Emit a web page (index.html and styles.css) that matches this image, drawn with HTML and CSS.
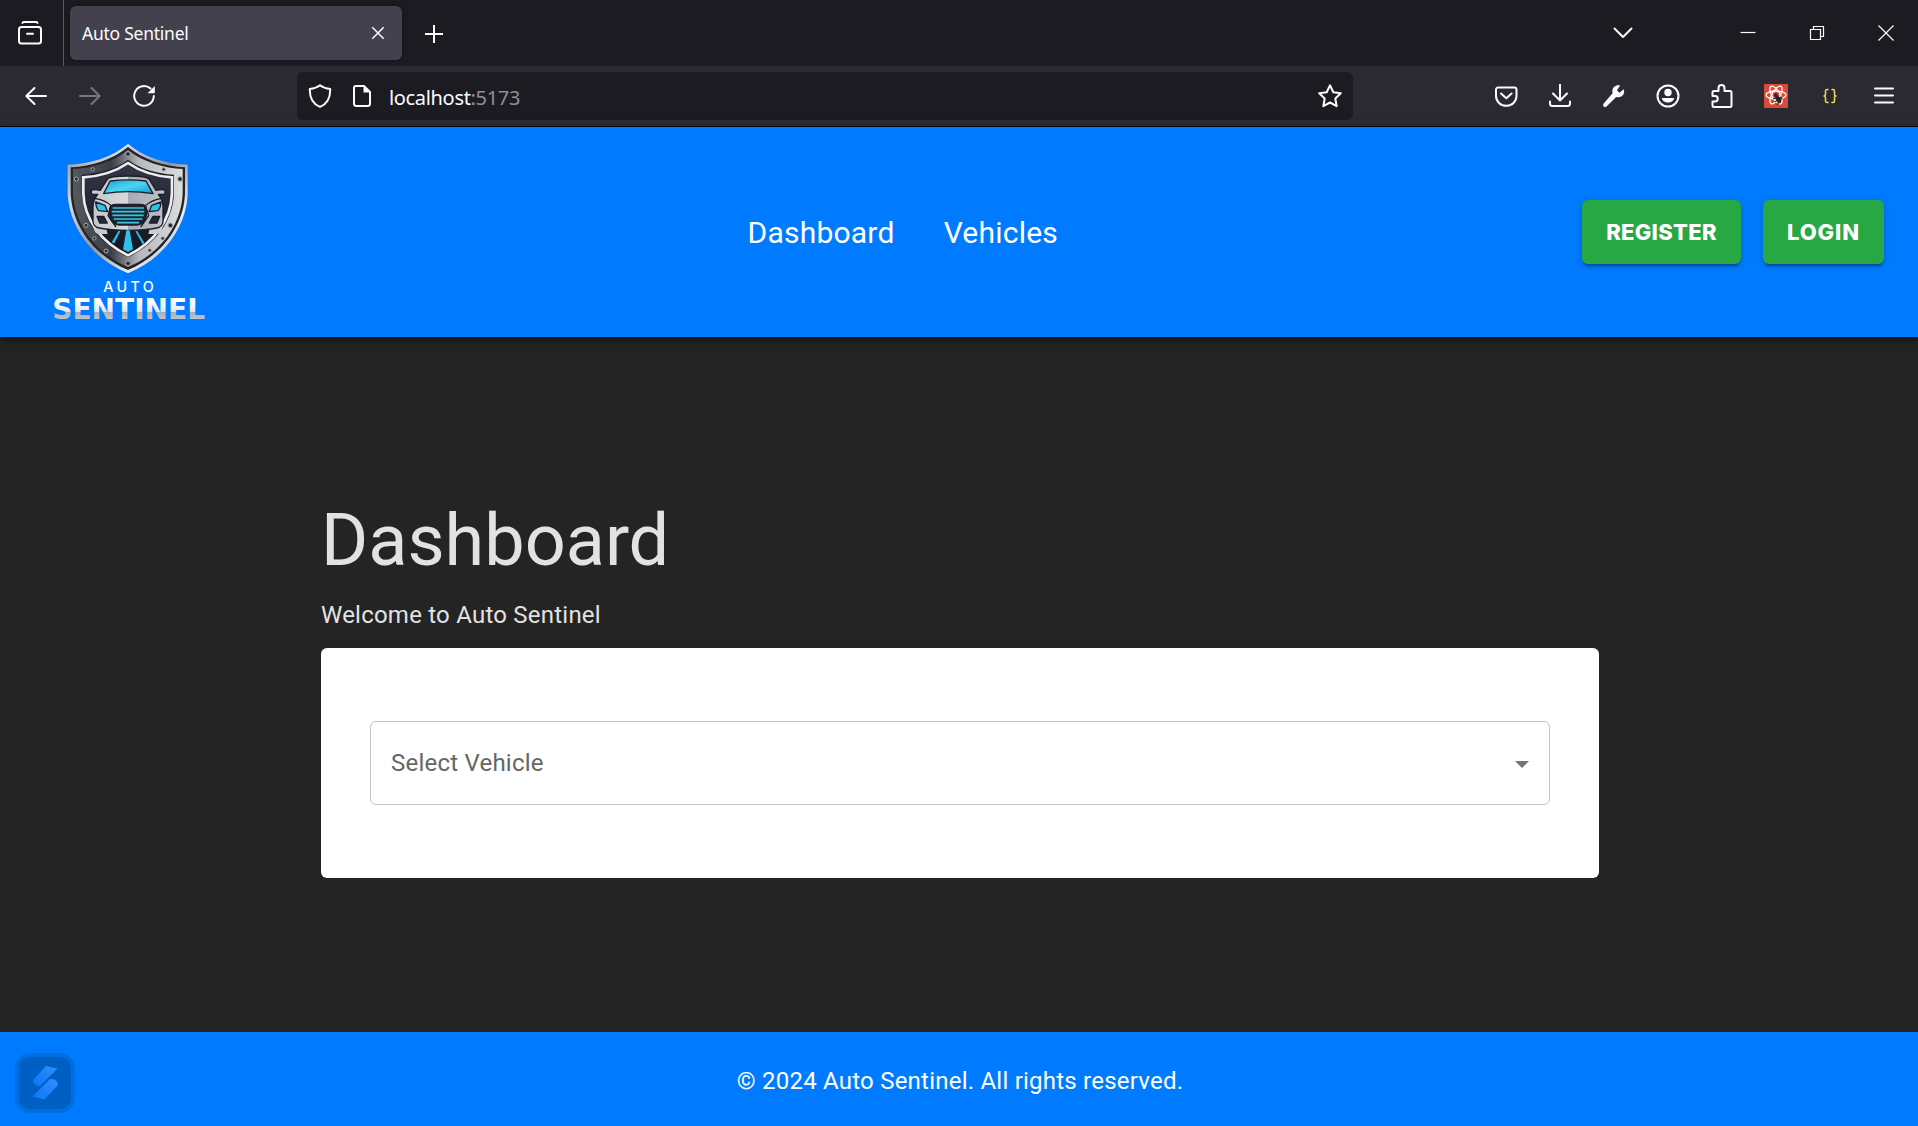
FILE: index.html
```html
<!DOCTYPE html>
<html lang="en">
<head>
<meta charset="utf-8">
<title>Auto Sentinel</title>
<link rel="stylesheet" href="styles.css">
</head>
<body>
<div class="tabbar">
  <div class="view-button">
    <svg class="icon" viewBox="0 0 24 24"><path d="M4.5 1.9Q5 .9 6.500 .9h11q1.500 0 2 1" /><rect x="1" y="6" width="22" height="16.500" rx="2.500"/><path d="M9 12.700h6"/></svg>
  </div>
  <div class="tab">
    <span class="tab-title">Auto Sentinel</span>
    <svg class="tab-close" viewBox="0 0 14 14"><path d="M1.300 1.300l11.400 11.400M12.700 1.300L1.300 12.700"/></svg>
  </div>
  <svg class="new-tab" viewBox="0 0 20 20"><path d="M10 1v18M1 10h18"/></svg>
  <div class="window-controls">
    <svg class="icon list-tabs" viewBox="0 0 24 24"><path d="M3.500 7.500l8.500 8.500 8.500-8.500"/></svg>
    <svg class="icon thin" viewBox="0 0 24 24"><path d="M4.500 11.500h15"/></svg>
    <svg class="icon thin" viewBox="0 0 24 24"><path d="M5.500 8.500h10v10h-10zM8.500 8.500v-3h10v10h-3"/></svg>
    <svg class="icon thin slant" viewBox="0 0 24 24"><path d="M4.500 4.500l15 15M19.500 4.500l-15 15"/></svg>
  </div>
</div>
<div class="toolbar">
  <div class="nav-buttons">
    <svg class="icon" viewBox="0 0 24 24"><path d="M22 12H2.500M10.500 4L2.300 12l8.200 8"/></svg>
    <svg class="icon dim" viewBox="0 0 24 24"><path d="M2 12h19.500M13.500 4l8.200 8-8.200 8"/></svg>
    <svg class="icon" viewBox="0 0 24 24"><path d="M21.800 12A9.800 9.800 0 1 1 18.500 4.600"/><path class="solid" d="M22.800 2v7.200h-7.200z"/></svg>
  </div>
  <div class="urlbar">
    <svg class="icon" viewBox="0 0 24 24"><path d="M12 1.200C9 3.500 5.500 4.500 1.800 5.100 1.600 13 4 19.500 12 22.900 20 19.500 22.400 13 22.200 5.100 18.500 4.500 15 3.500 12 1.200z"/></svg>
    <svg class="icon page-icon" viewBox="0 0 24 24"><path d="M6 2h8l6 6v11.500a2.500 2.500 0 0 1-2.500 2.500h-11A2.500 2.500 0 0 1 4 19.500V4A2 2 0 0 1 6 2z"/><path class="solid" d="M13.500 1.500v7h7z"/></svg>
    <span class="url">localhost<span class="port">:5173</span></span>
    <svg class="icon star" viewBox="0 0 24 24"><path d="M12 1.300l3.300 6.900 7.500 1-5.500 5.300 1.400 7.700L12 18.500l-6.700 3.700 1.400-7.700L1.200 9.200l7.500-1z"/></svg>
  </div>
  <div class="tools">
    <svg class="icon" viewBox="0 0 24 24"><path d="M4 3.500h16.500a2 2 0 0 1 2 2V12a10.200 9.800 0 0 1-20.500 0V5.500a2 2 0 0 1 2-2zM7 9.500l5.300 4.800 5.300-4.800"/></svg>
    <svg class="icon" viewBox="0 0 24 24"><path d="M12 0v16M5 9.500l7 7 7-7M2 17.500v2A2.500 2.500 0 0 0 4.500 22h15a2.500 2.500 0 0 0 2.500-2.500v-2"/></svg>
    <svg class="icon" viewBox="0 0 24 24"><path class="solid" d="M21.700 5.200l-4.200 3.500-2.600-2.400 3.300-4.700C13.500.300 9.200 4 10.600 9.300L1.500 19.700c-1.500 2 1 4.500 3 2.800l9.700-9.600c5.300 1.600 9.300-2.800 7.500-7.700z"/></svg>
    <svg class="icon" viewBox="0 0 24 24"><circle cx="12" cy="12" r="10.500"/><circle class="solid" cx="12" cy="8.500" r="3.700"/><path class="solid" d="M5.800 14h12.400c-.8 6-11.600 6-12.400 0z"/></svg>
    <svg class="icon" viewBox="0 0 24 24"><path d="M2.500 12V8.500Q2.500 7 4 7H8.500V4a3 3 0 0 1 6 0v3H20q1.500 0 1.500 1.500v13Q21.500 23 20 23H4q-1.500 0-1.500-1.500V17.500H5a2.700 2.700 0 0 0 0-5.500z"/></svg>
    <svg class="icon react" viewBox="0 0 24 24"><rect class="react-bg" width="24" height="24" rx="1"/><g class="orbit"><ellipse cx="12" cy="11" rx="10" ry="4"/><ellipse cx="12" cy="11" rx="10" ry="4" transform="rotate(60 12 11)"/><ellipse cx="12" cy="11" rx="10" ry="4" transform="rotate(120 12 11)"/></g><g transform="rotate(-30 14 15)"><circle class="bug" cx="14" cy="10.500" r="1.800"/><ellipse class="bug" cx="14" cy="15.500" rx="2.200" ry="4"/><path class="bug-legs" d="M10 12.500l8 2.500M10 16h8M10.500 19.500l7-3"/></g></svg>
    <svg class="icon braces" viewBox="0 0 24 24"><circle cx="12" cy="12" r="10.500"/><path d="M10 5.500H9q-1.500 0-1.500 1.500v3q0 2-1.500 2 1.500 0 1.500 2v3q0 1.500 1.500 1.500h1M14 5.500h1q1.500 0 1.500 1.500v3q0 2 1.500 2-1.500 0-1.500 2v3q0 1.500-1.500 1.500h-1"/></svg>
    <svg class="icon" viewBox="0 0 24 24"><path d="M3 4.500h18M3 11.500h18M3 18.500h18"/></svg>
  </div>
</div>
<header class="site-header">
  <svg class="logo" viewBox="0 -9 540 630" role="img">
    <defs>
      <linearGradient id="steel" x1="0" y1="0" x2="1" y2="1"><stop offset="0" stop-color="#85898f"/><stop offset=".25" stop-color="#d9dbdd"/><stop offset=".5" stop-color="#92969b"/><stop offset=".75" stop-color="#eceded"/><stop offset="1" stop-color="#888"/></linearGradient>
      <linearGradient id="rim" x1="0" y1="0" x2="1" y2="0"><stop offset="0" stop-color="#55595f"/><stop offset=".35" stop-color="#3b3e48"/><stop offset=".6" stop-color="#b6b8bb"/><stop offset="1" stop-color="#dcdddd"/></linearGradient>
      <linearGradient id="inside" x1="0" y1="0" x2="0" y2="1"><stop offset="0" stop-color="#343746"/><stop offset="1" stop-color="#12141f"/></linearGradient>
      <linearGradient id="car" x1="0" y1="0" x2="1" y2="0"><stop offset="0" stop-color="#c6c7cd"/><stop offset=".5" stop-color="#d8d8dc"/><stop offset=".5" stop-color="#a9abb3"/><stop offset="1" stop-color="#bfc0c7"/></linearGradient>
      <linearGradient id="glass" x1="0" y1="0" x2="1" y2="1"><stop offset="0" stop-color="#16a0d8"/><stop offset=".5" stop-color="#4bd5f2"/><stop offset="1" stop-color="#119bd0"/></linearGradient>
      <linearGradient id="word" x1="0" y1="0" x2="0" y2="1"><stop offset=".25" stop-color="#fff"/><stop offset=".58" stop-color="#e2e8ef"/><stop offset=".61" stop-color="#a7b1bd"/><stop offset=".8" stop-color="#bdc3ca"/></linearGradient>
    </defs>
    <path fill="url(#steel)" d="M264 41C220 80 150 102 83 104V190C87 290 155 385 264 430 373 385 440 290 443 190V104C378 102 308 80 264 41z"/>
    <path fill="#22252d" d="M264 51C220 88 155 109 92 112V190C96 285 160 376 264 420 368 376 432 285 435 190V112C373 109 308 88 264 51z"/>
    <path fill="url(#rim)" d="M264 60C220 96 155 115 99 117V190C103 280 163 369 264 411 365 369 425 280 428 190V117C373 115 308 96 264 60z"/>
    <path fill="#1e212b" d="M264 89C225 118 176 131 125 134V190C128 272 180 343 264 382 348 343 399 272 402 190V134C352 131 303 118 264 89z"/>
    <path fill="url(#inside)" stroke="#eceeef" stroke-width="8" d="M264 99C225 126 178 139 130 142V190C132 268 184 337 264 376 344 337 393 268 396 190V142C350 139 303 126 264 99z"/>
    <g fill="#25272c" stroke="#aaa" stroke-width="3"><circle cx="264" cy="72" r="7"/><circle cx="158" cy="118" r="5"/><circle cx="371" cy="118" r="5"/><circle cx="109" cy="147" r="6"/><circle cx="420" cy="147" r="7"/><circle cx="138" cy="286" r="6"/><circle cx="391" cy="286" r="7"/><circle cx="163" cy="325" r="5"/><circle cx="368" cy="325" r="5"/><circle cx="198" cy="363" r="6"/><circle cx="329" cy="361" r="5"/><circle cx="264" cy="400" r="7"/></g>
    <path fill="#c9cbd0" d="M161 294h37l5 18h-25q-14 0-17-18zM367 294h-37l-5 18h25q14 0 17-18z"/>
    <g stroke="#1b1e29" stroke-width="4" stroke-linejoin="round">
      <path fill="url(#car)" d="M154 181q7-4 27 0l21-33q7-10 62-10t64 10l20 33q20-4 27 0v9q-4 5-20 3 14 18 14 37v44q-1 17-18 20-35 7-87 7t-87-7q-17-3-18-20v-44q0-19 14-37-15 2-19-3z"/>
      <path fill="url(#glass)" d="M210 153q54-7 108 0l21 38q-73-12-148 0z"/>
      <path fill="#2ec2ed" d="M167 216l28 10 8 19-27-3q-8-8-9-26zM363 216l-28 10-8 19 27-3q8-8 9-26z"/>
      <path fill="none" d="M164 205q30 4 50 22l-10 30 24 34M366 205q-30 4-50 22l10 30-24 34"/>
      <path fill="#252936" d="M171 259h20l11 20h-23zM359 259h-20l-11 20h23z"/>
      <path fill="#182432" d="M226 223h77q17 0 17 20 0 40-30 42h-52q-30-2-30-42 0-20 18-20z"/>
    </g>
    <g stroke="#39c7df" stroke-width="5"><path d="M218 234h94M215 245h98M217 256h94M221 267h86M231 278h66"/></g>
    <path fill="#30bde8" d="M259 301h10l10 57-15 8-15-8zM236 302l5 2-18 36-8-3zM286 304l5-2 22 36-4 6z"/>
    <text class="logo-auto" x="190" y="486" textLength="151">AUTO</text>
    <text class="logo-word" x="37" y="566" textLength="458" lengthAdjust="spacingAndGlyphs" fill="url(#word)">SENTINEL</text>
  </svg>
  <nav class="site-nav"><a>Dashboard</a><a>Vehicles</a></nav>
  <div class="actions"><button class="button register">REGISTER</button><button class="button login">LOGIN</button></div>
</header>
<main class="content">
  <h1>Dashboard</h1>
  <p>Welcome to Auto Sentinel</p>
  <section class="card">
    <div class="select"><span>Select Vehicle</span><svg class="arrow" viewBox="0 0 14 7"><path d="M0 0h14L7 7z"/></svg></div>
  </section>
</main>
<footer class="site-footer">
  <span>© 2024 Auto Sentinel. All rights reserved.</span>
  <div class="badge">
    <svg viewBox="0 0 52 52"><defs><linearGradient id="bolt" x1="0" y1="1" x2="1" y2="0"><stop offset="0" stop-color="#0878f4"/><stop offset="1" stop-color="#308eff"/></linearGradient></defs><g fill="url(#bolt)"><path d="M27 9l11.500 2.500L21 29c-4 0-7-2-7-6z"/><path d="M31 22c4 0 8 1 8 6L25.500 42.500 13.500 39.500z"/></g></svg>
  </div>
</footer>
</body>
</html>
```
FILE: styles.css
```css
* { box-sizing: border-box; }
body {
  margin: 0;
  width: 1918px;
  height: 1126px;
  display: flex;
  flex-direction: column;
  overflow: hidden;
  background: #242424;
  font-family: Roboto, sans-serif;
}
svg { display: block; flex: none; }
.icon {
  width: 24px;
  height: 24px;
  fill: none;
  stroke: #fbfbfe;
  stroke-width: 2;
  stroke-linejoin: round;
  stroke-linecap: round;
}
.solid { fill: #fbfbfe; stroke: none; }
.dim { stroke: #77767d; }

.tabbar {
  flex: none;
  height: 66px;
  display: flex;
  align-items: center;
  background: #1c1b22;
  font-family: "Noto Sans", "Open Sans", sans-serif;
}
.view-button {
  width: 64px;
  height: 66px;
  padding: 21px 0 0 18px;
  border-right: 1px solid #5b5a63;
}
.tab {
  width: 332px;
  height: 54px;
  margin-left: 6px;
  padding: 0 17px 0 12px;
  display: flex;
  align-items: center;
  justify-content: space-between;
  border-radius: 6px;
  background: #42414d;
  box-shadow: 0 0 4px rgba(0, 0, 0, .4);
}
.tab-title { color: #fbfbfe; font-size: 17.5px; letter-spacing: -.25px; }
.tab-close { width: 14px; height: 14px; stroke: #fbfbfe; stroke-width: 1.5; }
.new-tab { width: 20px; height: 20px; margin: 2px 0 0 22px; stroke: #fbfbfe; stroke-width: 2; }
.window-controls {
  margin-left: auto;
  margin-right: 20px;
  display: flex;
  gap: 45px;
}
.list-tabs { margin-right: 56px; }
.thin { stroke-width: 1.2; stroke-linecap: butt; stroke-linejoin: miter; }

.toolbar {
  flex: none;
  height: 61px;
  display: flex;
  align-items: center;
  background: #2b2a33;
  border-bottom: 1px solid #0c0c0d;
}
.nav-buttons { display: flex; gap: 30px; margin-left: 24px; }
.urlbar {
  width: 1056px;
  height: 48px;
  margin-left: 141px;
  padding: 0 11px;
  display: flex;
  align-items: center;
  border-radius: 6px;
  background: #1c1b22;
}
.page-icon { margin-left: 18px; }
.url {
  margin-left: 15px;
  padding-top: 2px;
  color: #fbfbfe;
  font: 20px "Noto Sans", "Open Sans", sans-serif;
  letter-spacing: -.33px;
}
.port { color: #8f8f96; }
.star { margin-left: auto; }
.tools { display: flex; gap: 30px; margin: 0 22px 0 auto; }
.react-bg { fill: #dc4a36; stroke: none; }
.orbit { stroke: #fff; stroke-width: 1.3; }
.bug { fill: #2b2523; stroke: none; }
.bug-legs { stroke: #2b2523; stroke-width: 1; }
.braces { stroke: #e0d36b; stroke-width: 1.6; }
.braces circle { fill: #292a2b; stroke: none; }

.site-header {
  flex: none;
  height: 210px;
  display: grid;
  grid-template-columns: 747.500px 1fr auto;
  align-items: center;
  background: #007bff;
  box-shadow: 0 3px 6px -1px rgba(0, 0, 0, .2), 0 6px 8px rgba(0, 0, 0, .14), 0 2px 15px rgba(0, 0, 0, .12);
}
.logo { width: 180px; height: 210px; margin-left: 40px; }
.logo-auto { font: 500 43px Inter, sans-serif; fill: #fff; }
.logo-word { font: 700 86px "DejaVu Sans", sans-serif; }
.site-nav { display: flex; gap: 49px; color: #fff; font-size: 30px; letter-spacing: .225px; }
.actions { display: flex; gap: 22px; margin: 0 34px 0 0; }
.button {
  height: 64px;
  padding: 0;
  border: 0;
  border-radius: 6px;
  color: #fff;
  background: #28a745;
  font: 800 22px Inter, sans-serif;
  box-shadow: 0 5px 2px -3px rgba(0, 0, 0, .2), 0 3px 3px rgba(0, 0, 0, .14), 0 2px 8px rgba(0, 0, 0, .12);
}
.register { width: 159px; letter-spacing: .3px; }
.login { width: 121px; letter-spacing: .9px; }

.content {
  flex: 1;
  padding: 162px 319px 0 321px;
  color: #e2e2e2;
}
h1 { margin: 0 0 14px; font-weight: 400; font-size: 72px; line-height: 84px; }
p { margin: 0 0 15px; font-size: 24px; line-height: 36px; letter-spacing: .225px; }
.card {
  height: 230px;
  display: flex;
  align-items: center;
  padding: 0 49px;
  border-radius: 6px;
  background: #fff;
}
.select {
  flex: 1;
  height: 84px;
  padding: 0 20px;
  display: flex;
  align-items: center;
  justify-content: space-between;
  border: 1px solid #c4c4c4;
  border-radius: 6px;
  color: #666;
  font-size: 24px;
  letter-spacing: .225px;
}
.arrow { width: 14px; height: 7px; fill: #757575; margin-top: 2px; }

.site-footer {
  flex: none;
  height: 94px;
  display: flex;
  align-items: center;
  justify-content: center;
  position: relative;
  padding-left: 2px;
  padding-top: 3px;
  background: #007bff;
  color: #fff;
  font-size: 24px;
  letter-spacing: .225px;
}
.badge {
  position: absolute;
  left: 15px;
  top: 21px;
  width: 60px;
  height: 60px;
  border: 4px solid #006de0;
  border-radius: 15px;
  background: #005fc3;
}
.badge svg { width: 52px; height: 52px; }
```
